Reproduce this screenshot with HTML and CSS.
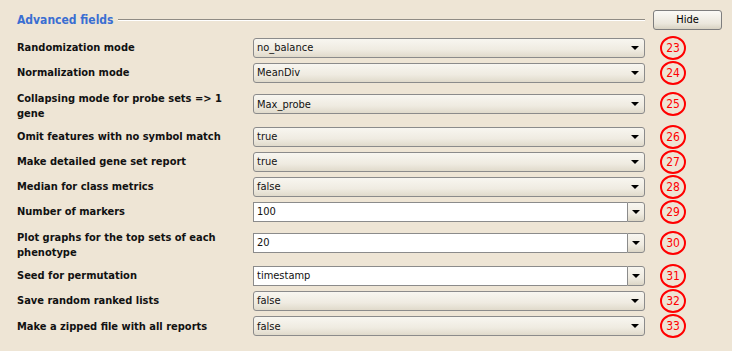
FILE: index.html
```html
<!DOCTYPE html>
<html lang="en">
<head>
    <meta charset="UTF-8">
    <title>Advanced fields</title>
    <link rel="stylesheet" href="styles.css">
</head>
<body>
    <div class="panel">
        <div class="header">
            <span class="title">Advanced fields</span>
            <span class="rule"></span>
            <button class="hide-btn">Hide</button>
        </div>

        <div class="row">
            <div class="label">Randomization mode</div>
            <div class="choice"><span>no_balance</span><i class="arrow"></i></div>
            <div class="num">23</div>
        </div>
        <div class="row">
            <div class="label">Normalization mode</div>
            <div class="choice"><span>MeanDiv</span><i class="arrow"></i></div>
            <div class="num">24</div>
        </div>
        <div class="row tall">
            <div class="label">Collapsing mode for probe sets =&gt; 1 gene</div>
            <div class="choice"><span>Max_probe</span><i class="arrow"></i></div>
            <div class="num">25</div>
        </div>
        <div class="row">
            <div class="label">Omit features with no symbol match</div>
            <div class="choice"><span>true</span><i class="arrow"></i></div>
            <div class="num">26</div>
        </div>
        <div class="row">
            <div class="label">Make detailed gene set report</div>
            <div class="choice"><span>true</span><i class="arrow"></i></div>
            <div class="num">27</div>
        </div>
        <div class="row">
            <div class="label">Median for class metrics</div>
            <div class="choice"><span>false</span><i class="arrow"></i></div>
            <div class="num">28</div>
        </div>
        <div class="row">
            <div class="label">Number of markers</div>
            <div class="combo"><span class="field">100</span><span class="drop"><i class="arrow"></i></span></div>
            <div class="num">29</div>
        </div>
        <div class="row tall">
            <div class="label">Plot graphs for the top sets of each phenotype</div>
            <div class="combo"><span class="field">20</span><span class="drop"><i class="arrow"></i></span></div>
            <div class="num">30</div>
        </div>
        <div class="row">
            <div class="label">Seed for permutation</div>
            <div class="combo"><span class="field">timestamp</span><span class="drop"><i class="arrow"></i></span></div>
            <div class="num">31</div>
        </div>
        <div class="row">
            <div class="label">Save random ranked lists</div>
            <div class="choice"><span>false</span><i class="arrow"></i></div>
            <div class="num">32</div>
        </div>
        <div class="row">
            <div class="label">Make a zipped file with all reports</div>
            <div class="choice"><span>false</span><i class="arrow"></i></div>
            <div class="num">33</div>
        </div>
    </div>
</body>
</html>
```

FILE: styles.css
```css
body {
    margin: 0;
    background-color: #eee5d5;
    font-family: "DejaVu Sans Condensed", "DejaVu Sans", sans-serif;
    font-size: 11px;
    color: #111;
}
.panel {
    padding: 0 10px 0 17px;
}
.header {
    display: flex;
    align-items: center;
    height: 35px;
    padding-top: 4px;
    box-sizing: border-box;
}
.title {
    color: #3a6ed2;
    font-weight: bold;
    font-size: 12px;
}
.rule {
    flex: 1;
    height: 0;
    border-top: 1px solid #8f8b84;
    border-bottom: 1px solid #fff;
    margin: 0 0 0 5px;
}
.hide-btn {
    margin-left: 8px;
    width: 69px;
    height: 20px;
    font-family: inherit;
    font-size: 11px;
    color: #000;
    border: 1px solid #7e7e7e;
    border-radius: 3px;
    background: linear-gradient(#fbfaf6, #ebe7dc 70%, #d8d2c2);
    padding: 0;
}
.row {
    display: grid;
    grid-template-columns: 236px 392px 16px 26px;
    align-items: center;
    height: 25px;
}
.row:last-child {
    height: 26px;
}
.row.tall {
    height: 39px;
    align-items: start;
}
.tall .label {
    padding-top: 6px;
}
.tall .choice,
.tall .combo {
    margin-top: 9px;
}
.tall .num {
    margin-top: 7px;
}
.label {
    font-weight: bold;
    line-height: 15px;
    padding-right: 14px;
}
.choice {
    height: 20px;
    box-sizing: border-box;
    border: 1px solid #8b8b8b;
    border-radius: 3px;
    background: linear-gradient(#f8f6f0, #efebe1 60%, #e0dacb);
    display: flex;
    align-items: center;
    padding: 0 4px 0 3px;
}
.choice span,
.combo .field {
    flex: 1;
}
.arrow {
    width: 0;
    height: 0;
    border-left: 4px solid transparent;
    border-right: 4px solid transparent;
    border-top: 4px solid #000;
    margin-right: 1px;
}
.combo {
    height: 20px;
    display: flex;
}
.combo .field {
    box-sizing: border-box;
    border: 1px solid #8b8b8b;
    border-right: none;
    background: #fff;
    padding: 0 3px;
    line-height: 18px;
}
.combo .drop {
    width: 18px;
    box-sizing: border-box;
    border: 1px solid #8b8b8b;
    border-radius: 0 3px 3px 0;
    background: linear-gradient(#f8f6f0, #efebe1 60%, #dcd6c6);
    display: flex;
    align-items: center;
    justify-content: center;
}
.combo .drop .arrow {
    margin: 0;
}
.num {
    grid-column: 4;
    width: 22px;
    height: 20px;
    border: 2px solid #f00;
    border-radius: 50%;
    color: #f00;
    font-size: 12px;
    text-align: center;
    line-height: 20px;
    box-sizing: content-box;
    margin-left: -1px;
}
```
